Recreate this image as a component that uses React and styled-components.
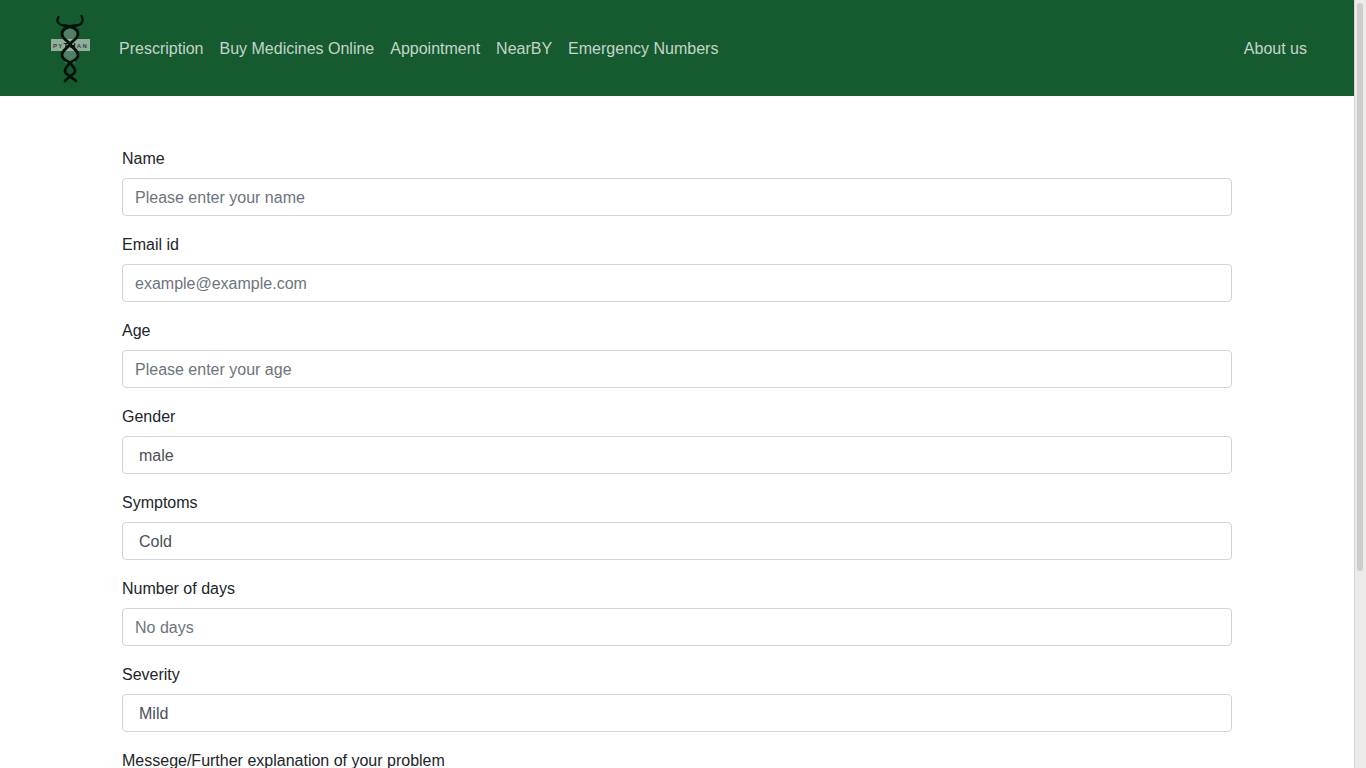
import styled, { createGlobalStyle } from "styled-components";

const GlobalStyle = createGlobalStyle`
  body {
    margin: 0 12px 0 0;
    font-family: "Liberation Sans", Arial, sans-serif;
    font-size: 16px;
    line-height: 1.5;
    color: #212529;
    background: #fff;
  }
`;

const links = ["Prescription", "Buy Medicines Online", "Appointment", "NearBY", "Emergency Numbers"];

const fields = [
  { label: "Name", placeholder: "Please enter your name" },
  { label: "Email id", placeholder: "example@example.com" },
  { label: "Age", placeholder: "Please enter your age" },
  { label: "Gender", options: ["male", "female"] },
  { label: "Symptoms", options: ["Cold", "Fever", "Cough"] },
  { label: "Number of days", placeholder: "No days" },
  { label: "Severity", options: ["Mild", "Moderate", "Severe"] },
];

function Logo() {
  return (
    <svg width="42" height="70" viewBox="0 0 42 70">
      <rect x="15" y="11" width="10" height="38" fill="#7fa08d" opacity="0.7" />
      <ellipse cx="20" cy="19" rx="7.5" ry="6.5" fill="#4f7f65" />
      <ellipse cx="20" cy="41" rx="7.5" ry="6.5" fill="#4f7f65" />
      <rect x="1" y="25" width="39" height="12" fill="#a9bcae" opacity="0.85" />
      <g fill="none" stroke="#06130c" strokeLinecap="round">
        <path strokeWidth="2.2" d="M8.5 3C5.5 8 9 11 14 11.5" />
        <path strokeWidth="2.2" d="M31.5 2C34.5 8 31 11 26 11.5" />
        <path strokeWidth="2.8" d="M14 11.5C21 12.5 28 14 28 19.5C28 25 22 27 20 30C18 34 12 36 12 41C12 46 18 47 20 49C22 51.5 25 54 25 57C25 60 21.5 61 20 62.5C18.5 64 16.5 65 15 67" />
        <path strokeWidth="2.8" d="M26 11.5C19 12.5 12 14 12 19.5C12 25 18 27 20 30C22 34 28 36 28 41C28 46 22 47 20 49C18 51.5 15 54 15 57C15 60 18.5 61 20 62.5C21.5 64 24.5 65 26 67" />
      </g>
      <text x="20.5" y="33.5" textAnchor="middle" fontFamily="Liberation Sans, sans-serif" fontSize="6" fontWeight="700" letterSpacing="1.3" fill="#2f4a3b">
        PY<tspan fill="#06130c" fontSize="8">TH</tspan>AN
      </text>
    </svg>
  );
}

export default function App() {
  return (
    <>
      <GlobalStyle />
      <Navbar>
        <Brand><Logo /></Brand>
        <NavList>
          {links.map((l) => (
            <NavLink key={l} href="#">{l}</NavLink>
          ))}
        </NavList>
        <NavLink href="#">About us</NavLink>
      </Navbar>
      <Container>
        <form>
          {fields.map((f) => (
            <Group key={f.label}>
              <Label>{f.label}</Label>
              {f.options ? (
                <Select defaultValue={f.options[0]}>
                  {f.options.map((o) => <option key={o}>{o}</option>)}
                </Select>
              ) : (
                <Input type="text" placeholder={f.placeholder} />
              )}
            </Group>
          ))}
          <Group>
            <Label>Messege/Further explanation of your problem</Label>
            <TextArea rows="3" />
          </Group>
          <SubmitButton type="button">Submit</SubmitButton>
        </form>
      </Container>
      <ScrollTrack>
        <ScrollThumb />
      </ScrollTrack>
    </>
  );
}

const Navbar = styled.nav`
  display: flex;
  align-items: center;
  justify-content: space-between;
  height: 96px;
  box-sizing: border-box;
  padding: 0 39px 0 50px;
  background: #165a30;
`;

const Brand = styled.a`
  display: flex;
  margin-top: 2px;
  margin-right: 19px;
`;

const NavList = styled.div`
  display: flex;
  flex: 1;
`;

const NavLink = styled.a`
  padding: 9px 8px 7px;
  color: rgba(255, 255, 255, 0.75);
  text-decoration: none;
`;

const Container = styled.main`
  box-sizing: border-box;
  width: 1140px;
  margin: 0 auto;
  padding: 50px 15px 110px;
`;

const Group = styled.div`
  margin-bottom: 16px;
`;

const Label = styled.label`
  display: block;
  padding-top: 1px;
  margin-bottom: 7px;
`;

const controlStyles = `
  display: block;
  box-sizing: border-box;
  width: 100%;
  padding: 7px 12px 5px;
  border: 1px solid #ced4da;
  border-radius: 4px;
  background: #fff;
  color: #495057;
  font-family: inherit;
  font-size: 16px;
  line-height: 1.5;
`;

const Input = styled.input`
  ${controlStyles}
  height: 38px;
  &::placeholder { color: #6c757d; opacity: 1; }
`;

const Select = styled.select`
  ${controlStyles}
  height: 38px;
  padding-left: 16px;
  appearance: none;
`;

const TextArea = styled.textarea`
  ${controlStyles}
  resize: vertical;
`;

const SubmitButton = styled.button`
  padding: 6px 12px;
  border: 1px solid #165a30;
  border-radius: 4px;
  background: #165a30;
  color: #fff;
  font-family: inherit;
  font-size: 16px;
  line-height: 1.5;
`;

const ScrollTrack = styled.div`
  position: fixed;
  top: 0;
  right: 0;
  bottom: 0;
  width: 12px;
  box-sizing: border-box;
  padding: 3px 3px 0 2px;
  background: #edebea;
  border-left: 1px solid #d8d4d1;
`;

const ScrollThumb = styled.div`
  height: 568px;
  border-radius: 3px;
  background: #cdcdcd;
`;
